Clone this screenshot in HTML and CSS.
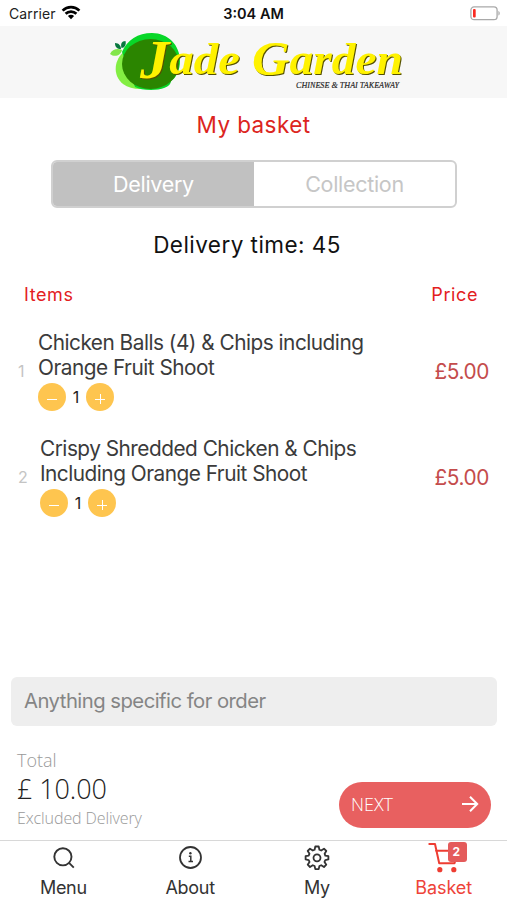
FILE: index.html
```html
<!DOCTYPE html>
<html lang="en">
<head>
<meta charset="utf-8">
<title>My basket</title>
<link rel="stylesheet" href="styles.css">
</head>
<body>
<div class="app">
  <div class="status">
    <div class="carrier"><span>Carrier</span>
      <svg width="20" height="15" viewBox="0 0 20 15" fill="none" stroke="#000" stroke-width="2.7"><path d="M1.6 5.6a12 12 0 0 1 16.8 0M4.6 8.8a7.7 7.7 0 0 1 10.8 0"/><path d="M10 14.2 6.9 11.1a4.4 4.4 0 0 1 6.2 0z" fill="#000" stroke="none"/></svg>
    </div>
    <div class="clock">3:04 AM</div>
    <svg class="battery" width="31" height="15" viewBox="0 0 31 15"><rect x=".9" y=".9" width="26.2" height="12.8" rx="3.2" fill="#fff" stroke="#a9a9a9" stroke-width="1.3"/><rect x="3" y="3" width="2.7" height="8.6" rx="1" fill="#fa2b22"/><path d="M28.4 5v4.6c1.8-.6 1.8-4 0-4.6z" fill="#a9a9a9"/></svg>
  </div>
  <header class="brand">
    <svg width="300" height="66" viewBox="0 0 300 66">
      <path d="M18 23C7 31 5 47 16 56c8 6 20 6 30 3L34 20z" fill="#83ee43"/>
      <path d="M45 5c16 0 28 12 28 28 0 9-4 17-9 20 0 6-10 9-20 9-7 0-12-1-16-3L15 24C20 12 31 5 45 5z" fill="#08d728"/>
      <ellipse cx="43.500" cy="36" rx="28.500" ry="25" fill="#2b8500"/>
      <path d="M3 26c2-5 8-6 12-4-1 5-7 8-12 4z" fill="#83e64b"/>
      <path d="M8 15c4 0 6 3 6 6-4 0-6-2-6-6zM14.500 20c-1-4 0-7 4-7 1 4-1 7-4 7z" fill="#08773f"/>
      <g class="logo-shadow"><text x="33" y="46" font-size="45" textLength="100" lengthAdjust="spacingAndGlyphs"><tspan font-size="54" dy="4">J</tspan><tspan dy="-4">ade</tspan></text><text x="145" y="46" font-size="45" textLength="151" lengthAdjust="spacingAndGlyphs"><tspan font-size="49" dy="1">G</tspan><tspan dy="-1">arden</tspan></text></g>
      <text class="tagline" x="189" y="60" textLength="103" lengthAdjust="spacingAndGlyphs">CHINESE &amp; THAI TAKEAWAY</text>
    </svg>
  </header>
  <main>
    <h1>My basket</h1>
    <div class="segments"><div class="seg on"><span>Delivery</span></div><div class="seg"><span>Collection</span></div></div>
    <p class="eta">Delivery time: 45</p>
    <div class="heads"><span>Items</span><span>Price</span></div>
    <div class="item">
      <span class="num">1</span>
      <div class="detail"><p class="name">Chicken Balls (4) &amp; Chips including<br>Orange Fruit Shoot</p>
        <div class="qty"><button class="minus"></button><span>1</span><button class="plus"></button></div></div>
      <span class="price">£5.00</span>
    </div>
    <div class="item second">
      <span class="num">2</span>
      <div class="detail"><p class="name">Crispy Shredded Chicken &amp; Chips<br>Including Orange Fruit Shoot</p>
        <div class="qty"><button class="minus"></button><span>1</span><button class="plus"></button></div></div>
      <span class="price">£5.00</span>
    </div>
  </main>
  <div class="note"><span>Anything specific for order</span></div>
  <section class="checkout">
    <div class="totals"><span class="label">Total</span><span class="sum">£ 10.00</span><span class="excl">Excluded Delivery</span></div>
    <button class="next"><span>NEXT</span><svg width="18" height="18" viewBox="0 0 18 18" fill="none" stroke="#fff" stroke-width="2"><path d="M1 9h15M9 1.800 16.200 9 9 16.200"/></svg></button>
  </section>
  <nav>
    <div class="tab"><svg width="26" height="26" viewBox="0 0 26 26" fill="none" stroke="#333" stroke-width="1.900"><circle cx="12.900" cy="11.800" r="8.600"/><path d="m19 17.900 4.800 4.700"/></svg><span>Menu</span></div>
    <div class="tab"><svg width="26" height="26" viewBox="0 0 26 26" fill="none" stroke="#333" stroke-width="1.800"><circle cx="13.500" cy="12.500" r="10.500"/><path d="M11.800 11.300h2v5.200M11.500 16.600h4.500" stroke-width="1.500"/><circle cx="13.400" cy="8.300" r="1.200" fill="#333" stroke="none"/></svg><span>About</span></div>
    <div class="tab"><svg width="26" height="26" viewBox="0 0 26 26" fill="none" stroke="#333" stroke-width="1.800" stroke-linejoin="round"><path d="M11.300 1.500h3.400l.7 3.200 1.800.8L20 3.700 22.300 6l-1.700 2.700.7 1.900 3.100.6v3.200l-3.100.7-.8 1.800 1.800 2.800-2.300 2.300-2.800-1.800-1.800.8-.7 3.100h-3.400l-.7-3.100-1.800-.8L6 22l-2.300-2.300 1.800-2.800-.8-1.800-3.100-.7v-3.200l3.100-.6.8-1.900L3.700 6 6 3.700l2.800 1.800 1.800-.8z"/><circle cx="13" cy="12.800" r="3.500"/></svg><span>My</span></div>
    <div class="tab active"><svg width="40" height="32" viewBox="0 0 40 32" fill="none" stroke="#ee3d32" stroke-width="2"><path d="M5.300 3h5.700l4.200 19.300H30.500M12 9.700h14M30.500 22.300l1.300-4" stroke-linecap="round" stroke-linejoin="round"/><circle cx="15.800" cy="28.700" r="2.600" fill="#ee3d32" stroke="none"/><circle cx="29.800" cy="28.700" r="2.600" fill="#ee3d32" stroke="none"/></svg><span>Basket</span><b class="badge">2</b></div>
  </nav>
</div>
</body>
</html>
```
FILE: styles.css
```css
* { box-sizing: border-box; }
body { margin: 0; background: #fff; font-family: Inter, "Liberation Sans", sans-serif; }
h1, p { margin: 0; font-weight: 400; }
span, p, h1 { white-space: nowrap; }
button { border: 0; padding: 0; }
.app { width: 507px; height: 900px; display: flex; flex-direction: column; overflow: hidden; }
.status { height: 26px; display: grid; grid-template-columns: 1fr auto 1fr; align-items: center; padding: 0 5px 0 7px; font-size: 14px; line-height: 26px; color: #222; }
.carrier { display: flex; align-items: center; gap: 6px; padding: 1px 0 0 2px; letter-spacing: .1px; }
.carrier svg { margin-top: -3px; margin-left: -1px; }
.clock { font-size: 14.500px; font-weight: 600; color: #111; padding-top: 1px; margin-right: 2px; }
.battery { justify-self: end; margin-right: 1px; }
.brand { height: 72px; background: #f7f7f7; display: flex; padding: 2px 0 0 107px; }
.logo-shadow { font-family: "Liberation Serif", serif; font-style: italic; font-weight: 700; fill: #fff200; filter: drop-shadow(1px 1px .5px #555000); }
.tagline { font: italic 8.500px "Liberation Serif", serif; fill: #222; stroke: #222; stroke-width: .15; }
main { flex: 1; display: flex; flex-direction: column; }
h1 { text-align: center; font-size: 22.500px; line-height: 28px; margin-top: 13px; letter-spacing: .4px; color: #dc2420; }
.segments { width: 406px; height: 48px; margin: 21px 0 0 51px; display: flex; border: 2px solid #d0d0d0; border-radius: 6px; overflow: hidden; }
.seg { flex: 1; display: flex; align-items: center; justify-content: center; font-size: 21.500px; letter-spacing: -.3px; color: #c6c6c6; }
.seg.on { background: #c1c1c1; color: #fff; }
.eta { text-align: center; margin-top: 22px; padding-right: 13px; font-size: 22.500px; line-height: 30px; letter-spacing: .45px; color: #111; }
.heads { display: flex; justify-content: space-between; padding: 0 29px 0 24px; margin-top: 24px; font-size: 18px; line-height: 22px; letter-spacing: .6px; color: #e3201e; }
.item { height: 106px; padding: 25px 18px 0 18px; display: flex; align-items: flex-start; }
.num { width: 20px; font-size: 16px; color: #c4c4c4; line-height: 24px; margin-top: 28px; }
.second .num { width: 22px; }
.detail { flex: 1; }
.name { font-size: 20.800px; line-height: 24.500px; letter-spacing: -.5px; color: #3b3b3b; }
.qty { display: flex; align-items: center; margin-top: 3px; }
.qty span { width: 20px; text-align: center; font-size: 16px; color: #222; }
.qty button { width: 28px; height: 28px; border-radius: 50%; background: #fec54f; display: grid; place-items: center; }
.minus::before, .plus::before { content: ""; width: 10px; height: 10px; margin-top: 4px; background: linear-gradient(#fff, #fff) center / 10px 1px no-repeat; }
.plus::before { background: linear-gradient(#fff, #fff) center / 10px 1px no-repeat, linear-gradient(#fff, #fff) center / 1px 10px no-repeat; }
.price { font-size: 20.800px; letter-spacing: -.4px; line-height: 24px; color: #c44c4c; margin-top: 29px; }
.note { margin: 0 10px 0 11px; height: 49px; border-radius: 6px; background: #eee; padding-left: 13px; line-height: 48px; font-size: 20.300px; letter-spacing: -.53px; color: #858585; }
.checkout { height: 114px; padding: 22px 16px 0 17px; display: flex; justify-content: space-between; font-family: "Open Sans", sans-serif; font-weight: 300; }
.totals { display: flex; flex-direction: column; }
.label { font-size: 18px; line-height: 24px; color: #999; }
.sum { font-size: 27px; line-height: 34px; letter-spacing: -.1px; color: #222; }
.excl { font-size: 16px; line-height: 24px; letter-spacing: -.1px; color: #999; }
.next { width: 152px; height: 46px; margin-top: 34px; border-radius: 23px; background: #e86060; color: #fff; display: flex; justify-content: space-between; align-items: center; padding: 0 12px 2px 12px; font: 300 18px "Open Sans", sans-serif; }
nav { height: 60px; border-top: 1px solid #d8d8d8; display: grid; grid-template-columns: repeat(4, 1fr); }
.tab { position: relative; display: flex; flex-direction: column; align-items: center; padding-top: 4px; font-size: 18px; letter-spacing: -.3px; line-height: 24px; color: #333; }
.tab span { margin-top: 5px; }
.tab.active { color: #ee4339; padding-top: 0; letter-spacing: -.1px; }
.tab.active span { margin-top: 3px; }
.badge { position: absolute; left: 68px; top: 1px; width: 19px; height: 20px; border-radius: 3px; background: #e45b5b; color: #fff; font-size: 12px; line-height: 20px; padding-right: 3px; text-align: center; }
```
